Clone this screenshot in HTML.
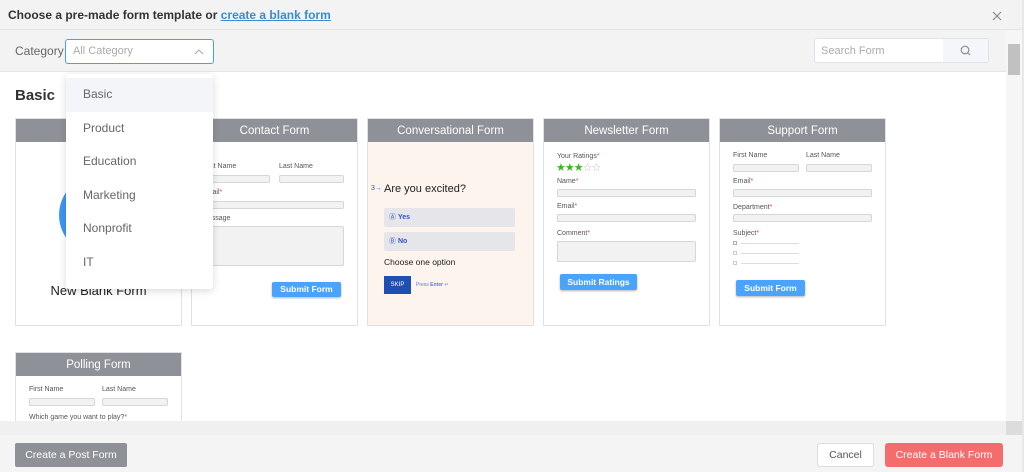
<!DOCTYPE html>
<html><head><meta charset="utf-8"><style>
*{box-sizing:border-box;margin:0;padding:0}
body{width:1024px;height:472px;overflow:hidden;font-family:"Liberation Sans",sans-serif;background:#fff;position:relative;color:#333}
.abs{position:absolute}
.top{left:0;top:0;width:1022px;height:30px;background:#f3f3f3;border-bottom:1px solid #e4e4e4}
.top span.t{position:absolute;left:8px;top:8px;font-size:12px;font-weight:bold;color:#333}
.top a{color:#3a8bd0;text-decoration:underline}
.bar{left:0;top:30px;width:1006px;height:42px;background:#f3f3f3;border-bottom:1px solid #e6e6e6}
.card{position:absolute;width:167px;height:208px;border:1px solid #dfe1e5;background:#fff;overflow:hidden}
.card .h{height:23px;background:#8f9198;color:#fff;font-size:11.5px;text-align:center;line-height:24px}
.lb{position:absolute;font-size:7px;color:#555}
.lb i{color:#e44;font-style:normal}
.in{position:absolute;height:8px;border:1px solid #d6d6d6;border-radius:2px;background:#f2f2f2}
.btn{position:absolute;background:#4aa3ff;color:#fff;font-size:8.5px;font-weight:bold;text-align:center;border-radius:2px;box-shadow:0 1px 2px rgba(0,0,0,.3)}
.dd{left:66px;top:74px;width:147px;height:215px;background:#fff;border-radius:3px;box-shadow:0 2px 8px rgba(0,0,0,.15)}
.dd div{height:33.5px;line-height:33.5px;padding-left:17px;font-size:12px;color:#666}
</style></head><body>
<div class="abs top"><span class="t">Choose a pre-made form template or <a>create a blank form</a></span>
<svg class="abs" style="left:992px;top:11px" width="10" height="10"><path d="M1 1L9 9M9 1L1 9" stroke="#888" stroke-width="1.2"/></svg></div>
<div class="abs bar">
<span class="abs" style="left:15px;top:14px;font-size:12px;color:#666">Category</span>
<div class="abs" style="left:65px;top:9px;width:149px;height:25px;border:1px solid #4a9fe8;border-radius:3px;background:#fff"><span class="abs" style="left:7px;top:5px;font-size:11px;color:#aaa">All Category</span>
<svg class="abs" style="left:128px;top:8px" width="10" height="7"><path d="M1 6L5 2L9 6" stroke="#aaa" fill="none" stroke-width="1.1"/></svg></div>
<div class="abs" style="left:814px;top:8px;width:175px;height:25px;border:1px solid #dde3ea;border-radius:3px;background:#fff"><span class="abs" style="left:6px;top:6px;font-size:11px;color:#aaa">Search Form</span><div class="abs" style="left:128px;top:0;width:45px;height:23px;background:#f4f6f9"><svg class="abs" style="left:17px;top:6px" width="11" height="11"><circle cx="5" cy="5" r="3.8" stroke="#888" fill="none" stroke-width="1.1"/><path d="M8 8L10 10" stroke="#888" stroke-width="1.1"/></svg></div></div>
</div>
<span class="abs" style="left:15px;top:87px;font-size:15px;font-weight:bold;color:#333">Basic</span>

<div class="card" style="left:15px;top:118px"><div class="h"></div>
<div class="abs" style="left:43px;top:56px;width:80px;height:80px;border-radius:50%;background:#3d95f5"></div>
<div class="abs" style="left:0;top:164px;width:165px;text-align:center;font-size:13px;color:#222">New Blank Form</div></div>

<div class="card" style="left:191px;top:118px"><div class="h">Contact Form</div>
<span class="lb" style="left:10px;top:44px">First Name</span><span class="lb" style="left:87px;top:44px">Last Name</span>
<div class="in" style="left:8px;top:56px;width:70px"></div><div class="in" style="left:87px;top:56px;width:65px"></div>
<span class="lb" style="left:10px;top:70px">Email<i>*</i></span><div class="in" style="left:8px;top:82px;width:144px"></div>
<span class="lb" style="left:10px;top:96px">Message</span><div class="in" style="left:8px;top:107px;width:144px;height:40px"></div>
<div class="btn" style="left:80px;top:163px;width:69px;height:15px;line-height:15px">Submit Form</div></div>

<div class="card" style="left:367px;top:118px;background:#fdf4ee"><div class="h">Conversational Form</div>
<span class="abs" style="left:3px;top:66px;font-size:7px;color:#3355bb">3→</span><span class="abs" style="left:16px;top:64px;font-size:11px;color:#222">Are you excited?</span>
<div class="abs" style="left:16px;top:89px;width:131px;height:19px;background:#e6e5ea;border-radius:2px;font-size:7px;color:#3355bb;line-height:19px;padding-left:5px">Ⓐ <b>Yes</b></div>
<div class="abs" style="left:16px;top:113px;width:131px;height:19px;background:#e6e5ea;border-radius:2px;font-size:7px;color:#3355bb;line-height:19px;padding-left:5px">Ⓑ <b>No</b></div>
<span class="abs" style="left:16px;top:138px;font-size:8.5px;color:#222">Choose one option</span>
<div class="abs" style="left:16px;top:157px;width:27px;height:18px;background:#1f4fb0;color:#fff;font-size:6px;text-align:center;line-height:18px">SKIP</div>
<span class="abs" style="left:48px;top:163px;font-size:5px;color:#6677cc">Press <b>Enter</b> ↵</span></div>

<div class="card" style="left:543px;top:118px"><div class="h">Newsletter Form</div>
<span class="lb" style="left:13px;top:34px">Your Ratings<i>*</i></span>
<span class="abs" style="left:12px;top:42px;font-size:11px;color:#3cb521;letter-spacing:-1px">★★★<span style="color:#bbb">☆☆</span></span>
<span class="lb" style="left:13px;top:59px">Name<i>*</i></span><div class="in" style="left:13px;top:70px;width:139px"></div>
<span class="lb" style="left:13px;top:84px">Email<i>*</i></span><div class="in" style="left:13px;top:95px;width:139px"></div>
<span class="lb" style="left:13px;top:111px">Comment<i>*</i></span><div class="in" style="left:13px;top:122px;width:139px;height:21px"></div>
<div class="btn" style="left:16px;top:155px;width:77px;height:16px;line-height:16px">Submit Ratings</div></div>

<div class="card" style="left:719px;top:118px"><div class="h">Support Form</div>
<span class="lb" style="left:13px;top:33px">First Name</span><span class="lb" style="left:86px;top:33px">Last Name</span>
<div class="in" style="left:13px;top:45px;width:66px"></div><div class="in" style="left:86px;top:45px;width:66px"></div>
<span class="lb" style="left:13px;top:59px">Email<i>*</i></span><div class="in" style="left:13px;top:70px;width:139px"></div>
<span class="lb" style="left:13px;top:85px">Department<i>*</i></span><div class="in" style="left:13px;top:95px;width:139px"></div>
<span class="lb" style="left:13px;top:111px">Subject<i>*</i></span>
<div class="abs" style="left:13px;top:122px;width:4px;height:4px;border:1px solid #aac"></div><div class="abs" style="left:21px;top:124px;width:58px;height:1px;background:#ddd"></div>
<div class="abs" style="left:13px;top:132px;width:4px;height:4px;border:1px solid #ccc"></div><div class="abs" style="left:21px;top:134px;width:58px;height:1px;background:#ddd"></div>
<div class="abs" style="left:13px;top:142px;width:4px;height:4px;border:1px solid #ccc"></div><div class="abs" style="left:21px;top:144px;width:58px;height:1px;background:#ddd"></div>
<div class="btn" style="left:16px;top:161px;width:69px;height:16px;line-height:16px">Submit Form</div></div>

<div class="card" style="left:15px;top:352px;height:80px"><div class="h">Polling Form</div>
<span class="lb" style="left:13px;top:33px">First Name</span><span class="lb" style="left:86px;top:33px">Last Name</span>
<div class="in" style="left:13px;top:45px;width:66px"></div><div class="in" style="left:86px;top:45px;width:66px"></div>
<span class="lb" style="left:13px;top:61px">Which game you want to play?<i>*</i></span></div>

<div class="abs dd"><div style="background:#f4f5f8;margin-top:4px">Basic</div><div>Product</div><div>Education</div><div>Marketing</div><div>Nonprofit</div><div>IT</div></div>

<div class="abs" style="left:1006px;top:30px;width:16px;height:391px;background:#f6f6f6"><div class="abs" style="left:2px;top:14px;width:12px;height:31px;background:#c1c1c1"></div></div>
<div class="abs" style="left:0;top:421px;width:1006px;height:14px;background:#f0f0f0"></div>
<div class="abs" style="left:1006px;top:421px;width:16px;height:14px;background:#dcdcdc"></div>
<div class="abs" style="left:0;top:435px;width:1022px;height:37px;background:#f4f4f4"></div>
<div class="abs" style="left:1022px;top:0;width:2px;height:472px;background:#e8e8e8"></div>
<div class="abs" style="left:15px;top:443px;width:112px;height:24px;background:#8f9198;border-radius:2px;color:#fff;font-size:10.5px;text-align:center;line-height:24px">Create a Post Form</div>
<div class="abs" style="left:817px;top:443px;width:57px;height:24px;background:#fff;border:1px solid #ddd;border-radius:3px;color:#555;font-size:10.5px;text-align:center;line-height:22px">Cancel</div>
<div class="abs" style="left:885px;top:443px;width:118px;height:24px;background:#f36d6d;border-radius:3px;color:#fff;font-size:10.5px;text-align:center;line-height:24px">Create a Blank Form</div>
</body></html>
